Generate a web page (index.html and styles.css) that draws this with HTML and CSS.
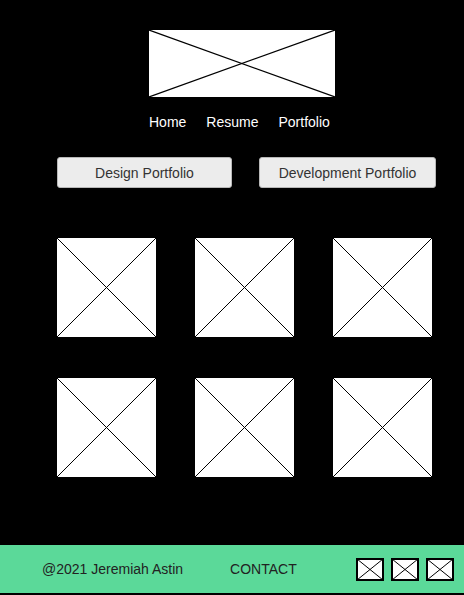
FILE: index.html
```html
<!DOCTYPE html>
<html lang="en">
<head>
    <meta charset="UTF-8">
    <title>Jeremiah Astin - Portfolio</title>
    <meta name="viewport" content="width=device-width, initial-scale=1.0">
    <link rel="stylesheet" href="styles.css">
</head>
<body>

    <!-- Header -->
    <header class="site-header">
        <svg class="logo" viewBox="0 0 186 67" preserveAspectRatio="none">
            <rect width="186" height="67" fill="#fff"></rect>
            <line x1="0" y1="0" x2="186" y2="67" stroke="#000" stroke-width="1.2"></line>
            <line x1="0" y1="67" x2="186" y2="0" stroke="#000" stroke-width="1.2"></line>
        </svg>
        <nav class="main-nav">
            <a href="#">Home</a>
            <a href="#">Resume</a>
            <a href="#">Portfolio</a>
        </nav>
    </header>

    <!-- Portfolio switch -->
    <div class="button-group">
        <button class="portfolio-button">Design Portfolio</button>
        <button class="portfolio-button wide">Development Portfolio</button>
    </div>

    <!-- Gallery -->
    <div class="gallery">
        <svg class="tile" viewBox="0 0 99 99"><rect width="99" height="99" fill="#fff"></rect><line x1="0" y1="0" x2="99" y2="99" stroke="#000"></line><line x1="0" y1="99" x2="99" y2="0" stroke="#000"></line></svg>
        <svg class="tile" viewBox="0 0 99 99"><rect width="99" height="99" fill="#fff"></rect><line x1="0" y1="0" x2="99" y2="99" stroke="#000"></line><line x1="0" y1="99" x2="99" y2="0" stroke="#000"></line></svg>
        <svg class="tile" viewBox="0 0 99 99"><rect width="99" height="99" fill="#fff"></rect><line x1="0" y1="0" x2="99" y2="99" stroke="#000"></line><line x1="0" y1="99" x2="99" y2="0" stroke="#000"></line></svg>
        <svg class="tile" viewBox="0 0 99 99"><rect width="99" height="99" fill="#fff"></rect><line x1="0" y1="0" x2="99" y2="99" stroke="#000"></line><line x1="0" y1="99" x2="99" y2="0" stroke="#000"></line></svg>
        <svg class="tile" viewBox="0 0 99 99"><rect width="99" height="99" fill="#fff"></rect><line x1="0" y1="0" x2="99" y2="99" stroke="#000"></line><line x1="0" y1="99" x2="99" y2="0" stroke="#000"></line></svg>
        <svg class="tile" viewBox="0 0 99 99"><rect width="99" height="99" fill="#fff"></rect><line x1="0" y1="0" x2="99" y2="99" stroke="#000"></line><line x1="0" y1="99" x2="99" y2="0" stroke="#000"></line></svg>
    </div>

    <!-- Footer -->
    <footer class="site-footer">
        <span class="copyright">@2021 Jeremiah Astin</span>
        <a class="contact" href="#">CONTACT</a>
        <div class="social">
            <svg class="social-icon" viewBox="0 0 28 23"><rect x="1" y="1" width="26" height="21" fill="#fff" stroke="#000" stroke-width="2"></rect><line x1="1" y1="1" x2="27" y2="22" stroke="#000"></line><line x1="1" y1="22" x2="27" y2="1" stroke="#000"></line></svg>
            <svg class="social-icon" viewBox="0 0 28 23"><rect x="1" y="1" width="26" height="21" fill="#fff" stroke="#000" stroke-width="2"></rect><line x1="1" y1="1" x2="27" y2="22" stroke="#000"></line><line x1="1" y1="22" x2="27" y2="1" stroke="#000"></line></svg>
            <svg class="social-icon" viewBox="0 0 28 23"><rect x="1" y="1" width="26" height="21" fill="#fff" stroke="#000" stroke-width="2"></rect><line x1="1" y1="1" x2="27" y2="22" stroke="#000"></line><line x1="1" y1="22" x2="27" y2="1" stroke="#000"></line></svg>
        </div>
    </footer>

</body>
</html>
```

FILE: styles.css
```css
/* Base */
body {
    margin: 0;
    background-color: #000;
    font-family: "Liberation Sans", Arial, sans-serif;
    padding-bottom: 2px;
}
.site-header {
    padding: 30px 0 0 149px;
}
.logo {
    display: block;
    width: 186px;
    height: 67px;
}
.main-nav {
    display: flex;
    gap: 20px;
    margin-top: 17px;
    font-size: 14px;
    line-height: 16px;
}
.main-nav a {
    color: #fff;
    text-decoration: none;
}
.button-group {
    display: flex;
    gap: 27px;
    padding-left: 57px;
    margin-top: 27px;
}
.portfolio-button {
    width: 175px;
    height: 31px;
    background-color: #ececec;
    color: #333;
    border: 1px solid #b8b8b8;
    border-radius: 3px;
    font-family: inherit;
    font-size: 14px;
    padding: 0;
}
.portfolio-button.wide {
    width: 177px;
}
.gallery {
    display: grid;
    grid-template-columns: repeat(3, 99px);
    column-gap: 39px;
    row-gap: 41px;
    padding-left: 57px;
    margin-top: 50px;
}
.tile {
    display: block;
    width: 99px;
    height: 99px;
}
/* Footer */
.site-footer {
    display: flex;
    align-items: center;
    height: 48px;
    margin-top: 68px;
    background-color: #5bd999;
    padding: 0 10px 0 42px;
    font-size: 14px;
    color: #222;
}
.contact {
    color: #222;
    text-decoration: none;
    margin-left: 47px;
}
.social {
    display: flex;
    gap: 7px;
    margin-left: auto;
    margin-top: 1px;
}
.social-icon {
    display: block;
    width: 28px;
    height: 23px;
}
```
